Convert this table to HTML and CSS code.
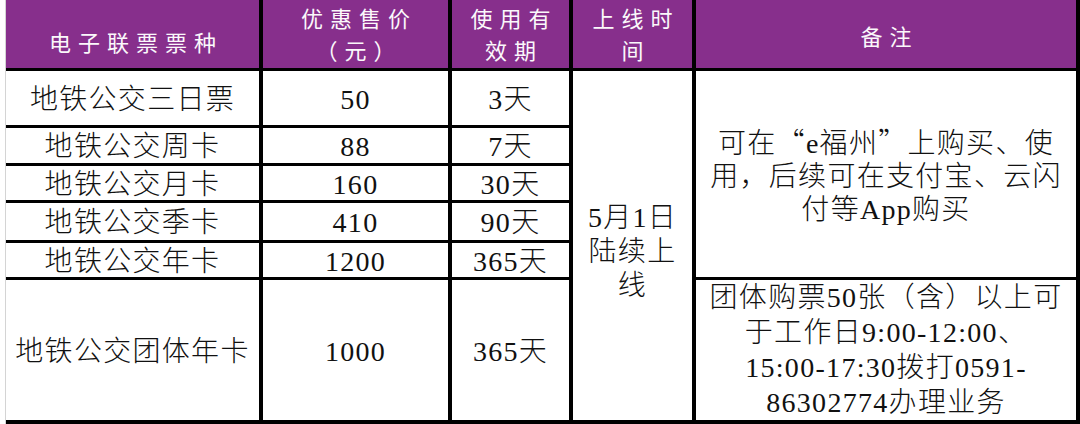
FILE: index.html
```html
<!DOCTYPE html>
<html lang="zh-CN">
<head>
<meta charset="utf-8">
<title>电子联票</title>
<link rel="stylesheet" href="styles.css">
</head>
<body>
<div class="sheet">
  <div class="table">
    <div class="hd hd-first"><span class="txt">电子联票票种</span></div>
    <div class="hd"><span class="txt">优惠售价<br>（元）</span></div>
    <div class="hd"><span class="txt">使用有<br>效期</span></div>
    <div class="hd"><span class="txt">上线时<br>间</span></div>
    <div class="hd hd-note"><span class="txt">备注</span></div>

    <div class="cell"><span class="txt">地铁公交三日票</span></div>
    <div class="cell"><span class="txt">50</span></div>
    <div class="cell"><span class="txt">3天</span></div>
    <div class="cell launch"><span class="txt">5月1日<br>陆续上<br>线</span></div>
    <div class="cell note note-a"><span class="txt">可在<span class="q">“</span>e福州<span class="q">”</span>上购买、使<br>用，后续可在支付宝、云闪<br>付等App购买</span></div>

    <div class="cell"><span class="txt">地铁公交周卡</span></div>
    <div class="cell"><span class="txt">88</span></div>
    <div class="cell"><span class="txt">7天</span></div>

    <div class="cell"><span class="txt">地铁公交月卡</span></div>
    <div class="cell"><span class="txt">160</span></div>
    <div class="cell"><span class="txt">30天</span></div>

    <div class="cell"><span class="txt">地铁公交季卡</span></div>
    <div class="cell"><span class="txt">410</span></div>
    <div class="cell"><span class="txt">90天</span></div>

    <div class="cell"><span class="txt">地铁公交年卡</span></div>
    <div class="cell"><span class="txt">1200</span></div>
    <div class="cell"><span class="txt">365天</span></div>

    <div class="cell"><span class="txt">地铁公交团体年卡</span></div>
    <div class="cell"><span class="txt">1000</span></div>
    <div class="cell"><span class="txt">365天</span></div>
    <div class="cell note note-b"><span class="txt">团体购票50张（含）以上可<br>于工作日9:00-12:00、<br>15:00-17:30拨打0591-<br>86302774办理业务</span></div>
  </div>
</div>
</body>
</html>
```

FILE: styles.css
```css
html, body {
  margin: 0;
  padding: 0;
  background: #ffffff;
}

.sheet {
  width: 1080px;
  height: 424px;
  overflow: hidden;
  background: #ffffff;
}

.table {
  margin-left: 5px;
  border-left: 1px solid #d4d4d4;
  background: #000000;
  display: grid;
  grid-template-columns: 253px 185px 117px 119px 380px;
  grid-template-rows: 68px 54px 35px 34px 37px 34px 140px;
  column-gap: 4px;
  row-gap: 3px;
  padding: 0 4px 4px 0;
  width: 1070px;
}

.txt {
  display: block;
}

.hd {
  background: #872f8c;
  color: #fbf8fb;
  font-family: "Noto Sans CJK SC", sans-serif;
  font-weight: 400;
  font-size: 22px;
  letter-spacing: 7px;
  line-height: 32px;
  text-align: center;
  display: flex;
  align-items: center;
  justify-content: center;
  padding-left: 7px;
  padding-bottom: 2px;
}

.hd-first {
  padding-top: 14px;
  padding-bottom: 0;
}

.hd-note {
  padding-top: 2px;
  padding-bottom: 0;
}

.cell {
  background: #ffffff;
  color: #111111;
  font-family: "Liberation Serif", "Noto Sans CJK SC", serif;
  font-weight: 300;
  font-size: 28px;
  letter-spacing: 1.3px;
  line-height: 32px;
  text-align: center;
  display: flex;
  align-items: center;
  justify-content: center;
  padding-top: 3px;
}

.q {
  font-family: "Noto Sans CJK SC", sans-serif;
}

.launch {
  grid-column: 4;
  grid-row: 2 / 8;
  line-height: 34px;
  padding-top: 12px;
}

.note {
  grid-column: 5;
}

.note-a {
  grid-row: 2 / 7;
  line-height: 33px;
}

.note-b {
  grid-row: 7;
  line-height: 35px;
  padding-top: 0;
}
```
